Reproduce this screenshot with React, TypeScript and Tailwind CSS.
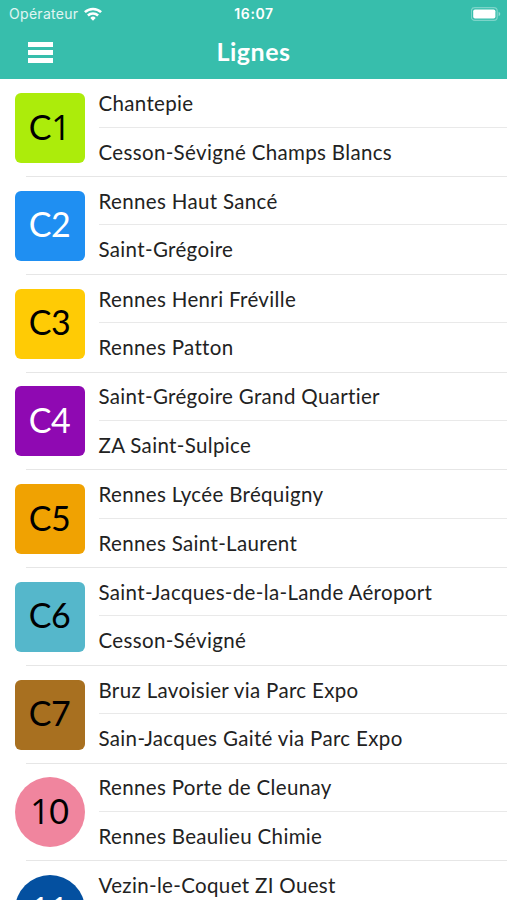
import React from 'react';
import clsx from 'clsx';

interface Line {
  code: string;
  color: string;
  text: string;
  round?: boolean;
  stops: string[];
}

const lines: Line[] = [
  { code: 'C1', color: 'bg-[#acec0b]', text: 'text-black', stops: ['Chantepie', 'Cesson-Sévigné Champs Blancs'] },
  { code: 'C2', color: 'bg-[#1f8ff2]', text: 'text-white', stops: ['Rennes Haut Sancé', 'Saint-Grégoire'] },
  { code: 'C3', color: 'bg-[#ffcb05]', text: 'text-black', stops: ['Rennes Henri Fréville', 'Rennes Patton'] },
  { code: 'C4', color: 'bg-[#8f09b2]', text: 'text-white', stops: ['Saint-Grégoire Grand Quartier', 'ZA Saint-Sulpice'] },
  { code: 'C5', color: 'bg-[#f0a202]', text: 'text-black', stops: ['Rennes Lycée Bréquigny', 'Rennes Saint-Laurent'] },
  { code: 'C6', color: 'bg-[#55b7cb]', text: 'text-black', stops: ['Saint-Jacques-de-la-Lande Aéroport', 'Cesson-Sévigné'] },
  { code: 'C7', color: 'bg-[#a87020]', text: 'text-black', stops: ['Bruz Lavoisier via Parc Expo', 'Sain-Jacques Gaité via Parc Expo'] },
  { code: '10', color: 'bg-[#f0859e]', text: 'text-black', round: true, stops: ['Rennes Porte de Cleunay', 'Rennes Beaulieu Chimie'] },
  { code: '11', color: 'bg-[#0450a0]', text: 'text-white', round: true, stops: ['Vezin-le-Coquet ZI Ouest'] },
];

const StatusBar: React.FC = () => (
  <div className="grid grid-cols-3 items-center h-[27px] pl-[9px] pr-[6px] font-['Inter',sans-serif] text-[14px] text-white">
    <div className="flex items-center gap-[6px]">
      <span className="tracking-[0.3px] text-white/85">Opérateur</span>
      <svg width="18" height="14" viewBox="0 0 18 14" fill="none" stroke="white" strokeWidth="2.5">
        <path d="M0.9 5.2a11.6 11.6 0 0 1 16.2 0" />
        <path d="M3.9 8.5a7.3 7.3 0 0 1 10.2 0" />
        <path d="M9 13.8l-2.7-2.9a3.8 3.8 0 0 1 5.4 0z" fill="white" stroke="none" />
      </svg>
    </div>
    <span className="-ml-[2px] text-center font-semibold tracking-[0.6px]">16:07</span>
    <svg className="justify-self-end" width="30" height="14" viewBox="0 0 30 14">
      <rect x="0.4" y="0.6" width="25.8" height="12.8" rx="3.4" fill="none" stroke="white" strokeOpacity="0.35" strokeWidth="1.2" />
      <rect x="2.2" y="2.4" width="22.2" height="9.2" rx="1.8" fill="white" />
      <path d="M27.6 4.8c2.2 0.8 2.2 3.6 0 4.4z" fill="white" fillOpacity="0.45" />
    </svg>
  </div>
);

// Lato's 1 has a foot, so that digit is set in Open Sans
const Badge: React.FC<{ line: Line }> = ({ line }) => (
  <div
    className={clsx(
      'flex items-center justify-center w-[70px] h-[70px] mt-[14px] pb-[3px] shrink-0 text-[34px] leading-none',
      line.color,
      line.text,
      line.round ? 'rounded-full' : 'rounded-[6px]'
    )}
  >
    <span className="tracking-[-0.4px]">
      {line.code.split('').map((char, i) => (
        <span key={i} className={char === '1' ? "font-['Open_Sans',sans-serif]" : undefined}>{char}</span>
      ))}
    </span>
  </div>
);

export default function App() {
  return (
    <div className="w-full h-screen overflow-hidden bg-white font-['Lato',sans-serif]">
      {/* Header */}
      <header className="h-[79px] bg-[#37beac]">
        <StatusBar />
        <div className="grid grid-cols-3 items-center h-[50px] text-white">
          <div className="flex flex-col gap-[3px] w-[25px] ml-[28px]">
            <span className="h-[5px] bg-white"></span>
            <span className="h-[5px] bg-white"></span>
            <span className="h-[5px] bg-white"></span>
          </div>
          <h1 className="pb-[2px] text-center text-[25px] font-bold leading-none tracking-[0.5px]">Lignes</h1>
        </div>
      </header>

      {/* Lines */}
      <ul>
        {lines.map((line) => (
          <li key={line.code} className="flex flex-col h-[97.75px]">
            <div className="flex flex-1 pl-[14.5px] gap-[14px]">
              <Badge line={line} />
              <div className="flex-1 flex flex-col text-[20.5px] text-[#222222] whitespace-nowrap tracking-[0.34px]">
                {line.stops.map((stop, i) => (
                  <div key={stop} className={clsx('h-[48.5px] leading-[48px]', i === 0 && 'border-b border-[#e9e9e9]')}>
                    {stop}
                  </div>
                ))}
              </div>
            </div>
            <div className="h-px ml-[26px] bg-[#e6e6e6]"></div>
          </li>
        ))}
      </ul>
    </div>
  );
}
